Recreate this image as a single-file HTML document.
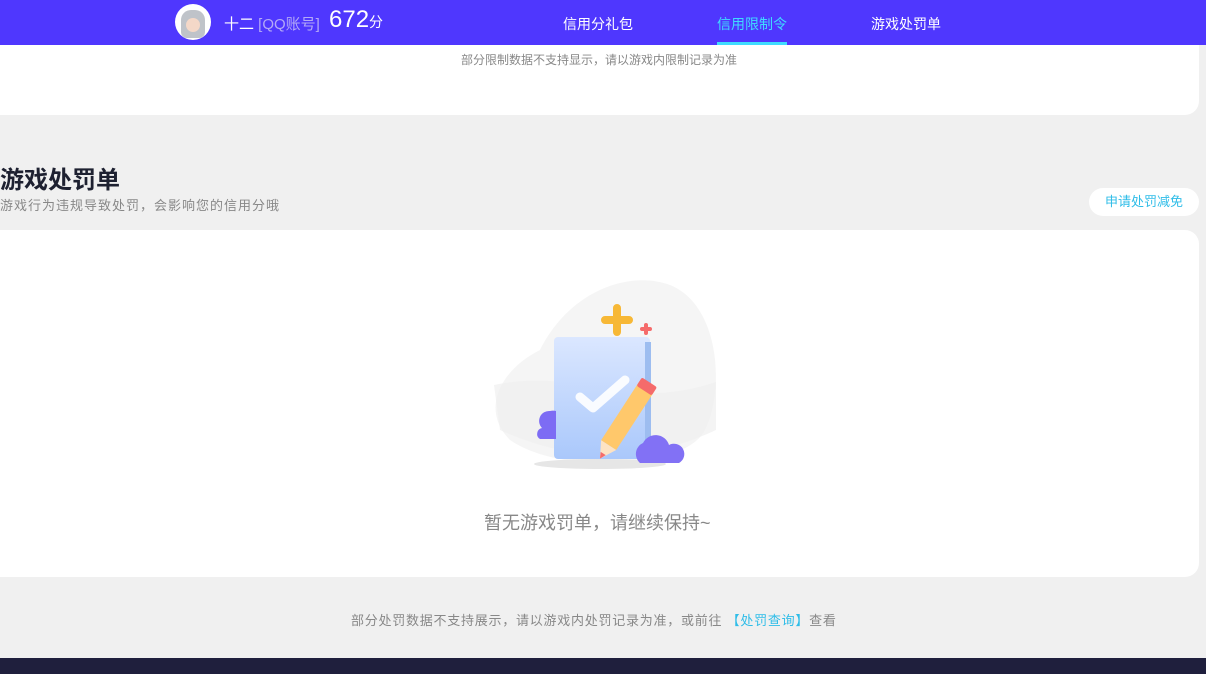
<!DOCTYPE html>
<html><head><meta charset="utf-8"><style>
*{margin:0;padding:0;box-sizing:border-box}
body{width:1206px;height:674px;overflow:hidden;background:#f0f0f0;font-family:"Liberation Sans","Noto Sans CJK SC",sans-serif;position:relative}
.nav{position:absolute;left:0;top:0;width:1206px;height:45px;background:#4f37fe;z-index:2}
.abs{position:absolute;white-space:nowrap}
.card1{position:absolute;left:-20px;top:20px;width:1219px;height:95px;background:#fff;border-radius:14px}
.card2{position:absolute;left:-20px;top:230px;width:1219px;height:347px;background:#fff;border-radius:14px}
</style></head><body>
<div class="card1"></div>
<div class="nav">
 <div class="abs" style="left:175px;top:4px;width:36px;height:36px;border-radius:50%;background:#fff;overflow:hidden">
  <div style="position:absolute;left:6px;top:6px;width:24px;height:28px;background:#bfc3c9;border-radius:10px 10px 6px 6px"></div>
  <div style="position:absolute;left:11px;top:14px;width:14px;height:14px;background:#f4d8c8;border-radius:50%"></div>
 </div>
 <div class="abs" style="left:224px;top:13px;font-size:15px;color:#fff">十二 <span style="color:#b4aaf6">[QQ账号]</span></div>
 <div class="abs" style="left:329px;top:6px;font-size:24px;color:#fff">672<span style="font-size:14px">分</span></div>
 <div class="abs" style="left:563px;top:14px;font-size:14px;color:#fff">信用分礼包</div>
 <div class="abs" style="left:717px;top:14px;font-size:14px;color:#3fdcff">信用限制令</div>
 <div class="abs" style="left:717px;top:42px;width:70px;height:3px;background:#3fdcff"></div>
 <div class="abs" style="left:871px;top:14px;font-size:14px;color:#fff">游戏处罚单</div>
</div>
<div class="abs" style="left:461px;top:51px;font-size:12px;color:#888">部分限制数据不支持显示，请以游戏内限制记录为准</div>
<div class="abs" style="left:0;top:160px;font-size:24px;font-weight:bold;color:#1e2131">游戏处罚单</div>
<div class="abs" style="left:0;top:195px;font-size:13px;color:#888;letter-spacing:1px">游戏行为违规导致处罚，会影响您的信用分哦</div>
<div class="abs" style="left:1089px;top:188px;width:110px;height:28px;border-radius:14px;background:#fff;color:#2fbde8;font-size:13px;line-height:28px;text-align:center">申请处罚减免</div>
<div class="card2"></div>
<svg class="abs" style="left:480px;top:270px" width="250" height="210" viewBox="0 0 250 210">
 <defs><linearGradient id="g" x1="0" y1="0" x2="0" y2="1"><stop offset="0" stop-color="#dbe7ff"/><stop offset="1" stop-color="#aac8fb"/></linearGradient></defs>
 <path d="M60 80 C90 20 150 0 190 15 C240 35 245 120 225 160 C205 200 80 205 30 170 C0 140 20 100 60 80Z" fill="#f5f5f5"/>
 <path d="M14 115 Q60 105 120 118 T236 112 L236 160 Q130 210 20 160Z" fill="#efefef" opacity=".7"/>
 <ellipse cx="120" cy="194" rx="66" ry="5" fill="#e6e6e6"/>
 <rect x="74" y="67" width="96" height="122" rx="4" fill="url(#g)"/>
 <rect x="165" y="72" width="6" height="115" fill="#9dbdf0"/>
 <path d="M100 127 L113 138 L145 110" stroke="#fff" stroke-width="9" fill="none" stroke-linecap="round" stroke-linejoin="round" opacity=".9"/>
 <path d="M62 158 a10 10 0 0 1 8 -17 a12 12 0 0 1 6 0 l0 28 l-16 0 a6 6 0 0 1 2 -11z" fill="#7d6cf4"/>
 <path d="M160 193 a12 12 0 0 1 3 -20 a14 14 0 0 1 26 2 a10 10 0 0 1 10 18z" fill="#8271f5"/>
 <g transform="rotate(33 145 150)"><rect x="136" y="110" width="18" height="70" fill="#ffc86b"/><rect x="136" y="105" width="18" height="10" rx="2" fill="#f56b6b"/><path d="M136 180 L154 180 L145 196Z" fill="#fde3c4"/><path d="M142 190 L148 190 L145 196Z" fill="#f56b6b"/></g>
 <path d="M137 38 v24 M125 50 h24" stroke="#f7b836" stroke-width="8" stroke-linecap="round"/>
 <path d="M166 55 v8 M162 59 h8" stroke="#f56b6b" stroke-width="4" stroke-linecap="round"/>
</svg>
<div class="abs" style="left:484px;top:509px;font-size:18px;color:#888">暂无游戏罚单，请继续保持~</div>
<div class="abs" style="left:351px;top:610px;font-size:13px;color:#888;letter-spacing:0.75px">部分处罚数据不支持展示，请以游戏内处罚记录为准，或前往 <span style="color:#2fbde8">【处罚查询】</span>查看</div>
<div class="abs" style="left:0;top:658px;width:1206px;height:16px;background:#1f1f3d"></div>
</body></html>
